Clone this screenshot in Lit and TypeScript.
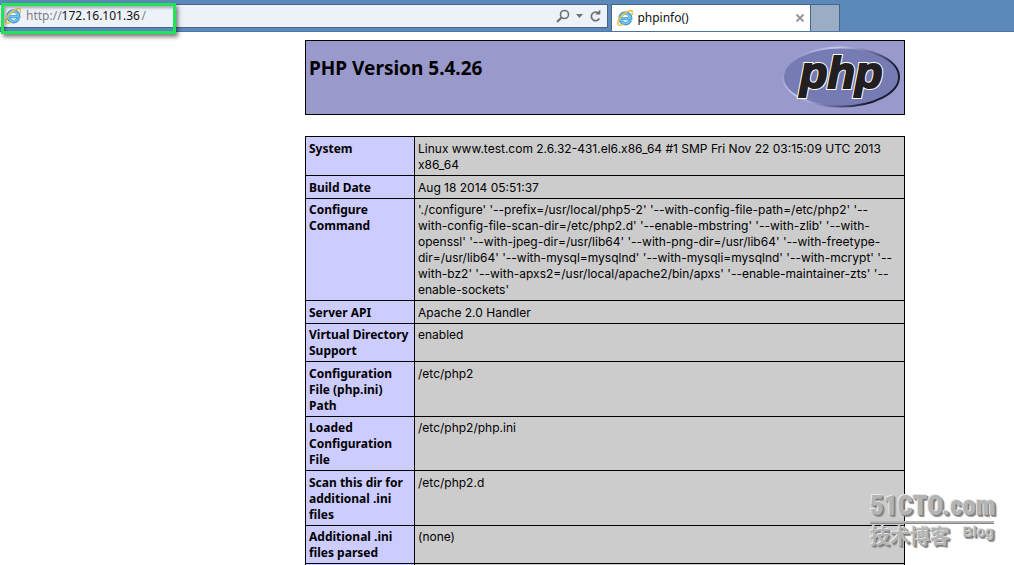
import { LitElement, html, css, svg } from "lit";
import { customElement } from "lit/decorators.js";

interface Row {
  name: string;
  value: string;
}

const ROWS: Row[] = [
  {
    name: "System",
    value: "Linux www.test.com 2.6.32-431.el6.x86_64 #1 SMP Fri Nov 22 03:15:09 UTC 2013\nx86_64",
  },
  { name: "Build Date", value: "Aug 18 2014 05:51:37" },
  {
    name: "Configure\nCommand",
    value: [
      "'./configure' '--prefix=/usr/local/php5-2' '--with-config-file-path=/etc/php2' '--",
      "with-config-file-scan-dir=/etc/php2.d' '--enable-mbstring' '--with-zlib' '--with-",
      "openssl' '--with-jpeg-dir=/usr/lib64' '--with-png-dir=/usr/lib64' '--with-freetype-",
      "dir=/usr/lib64' '--with-mysql=mysqlnd' '--with-mysqli=mysqlnd' '--with-mcrypt' '--",
      "with-bz2' '--with-apxs2=/usr/local/apache2/bin/apxs' '--enable-maintainer-zts' '--",
      "enable-sockets'",
    ].join("\n"),
  },
  { name: "Server API", value: "Apache 2.0 Handler" },
  { name: "Virtual Directory\nSupport", value: "enabled" },
  { name: "Configuration\nFile (php.ini)\nPath", value: "/etc/php2" },
  { name: "Loaded\nConfiguration\nFile", value: "/etc/php2/php.ini" },
  { name: "Scan this dir for\nadditional .ini\nfiles", value: "/etc/php2.d" },
  { name: "Additional .ini\nfiles parsed", value: "(none)" },
];

const browserIcon = () => html`
  <svg class="ie" viewBox="0 0 16 16" width="16" height="16" aria-hidden="true">
    <path
      d="M13.3 10.4A5.3 5.3 0 1 1 13.7 8.6H4.6"
      fill="none"
      stroke="#3f92c8"
      stroke-width="3.4"
    />
    <path
      d="M13 10.6A5 5 0 1 1 13.5 8.4H5"
      fill="none"
      stroke="#6fc3ee"
      stroke-width="2"
    />
    <path
      d="M1.6 15C-.6 13 2 8 6.6 4.2 10.4 1.1 14.2 -.2 15.2 1.2c.7 1 .3 2.4-.5 3.9"
      fill="none"
      stroke="#e8c54a"
      stroke-width="1.7"
    />
    <path d="M1.6 15c1 .8 2.8.2 4.6-.8" fill="none" stroke="#e8c54a" stroke-width="1.5" />
  </svg>
`;

@customElement("browser-bar")
export class BrowserBar extends LitElement {
  static styles = css`
    :host {
      display: flex;
      height: 32px;
      box-sizing: border-box;
      background: #5b8aba;
      border-bottom: 1px solid #4b76a3;
      font: 12px/16px "Noto Sans", "Open Sans", sans-serif;
    }
    .address {
      display: flex;
      align-items: center;
      flex: 0 1 60%;
      box-sizing: border-box;
      margin: 4px 3px 3px 0;
      padding: 0 5px;
      background: #edf2f9;
      border: 1px solid #44668c;
      border-left: 0;
      color: #7b7f85;
    }
    .ie {
      display: block;
      flex: none;
      margin-right: 4px;
    }
    .address .ie {
      margin-right: 5px;
    }
    .url {
      width: 80px;
      padding: 0;
      border: 0;
      outline: 0;
      background: none;
      font: inherit;
      color: #111;
    }
    .tools {
      display: flex;
      align-items: center;
      gap: 6px;
      margin-left: auto;
    }
    button {
      display: block;
      padding: 0;
      border: 0;
      background: none;
    }
    button svg {
      display: block;
    }
    .tab {
      display: flex;
      align-items: center;
      width: 200px;
      box-sizing: border-box;
      margin-top: 4px;
      padding: 0 6px 0 5px;
      background: #fff;
      border: 1px solid #44668c;
      border-bottom: 0;
      color: #111;
    }
    .tab .close {
      margin-left: auto;
    }
    .new-tab {
      width: 29px;
      margin-top: 4px;
      background: #9aadc4;
      border: 1px solid #44668c;
      border-width: 1px 1px 0 0;
    }
  `;

  render() {
    return html`
      <div class="address">
        ${browserIcon()}
        <label for="url">http://</label>
        <input class="url" id="url" type="text" value="172.16.101.36" spellcheck="false" />
        <span>/</span>
        <div class="tools">
          <button aria-label="Search">
            <svg width="14" height="14" viewBox="0 0 14 14" fill="none" stroke="#6c727a">
              <circle cx="8.5" cy="5.5" r="4" stroke-width="1.6" />
              <path d="M5.5 8.5 1 13" stroke-width="2.2" />
            </svg>
          </button>
          <button aria-label="Search options">
            <svg width="7" height="4" viewBox="0 0 7 4"><path d="M0 0h7L3.5 4z" fill="#6c727a" /></svg>
          </button>
          <button aria-label="Refresh">
            <svg width="13" height="14" viewBox="0 0 13 14" fill="none" stroke="#6c727a">
              <path d="M10.4 9.5A4.3 4.3 0 1 1 8.8 3.7" stroke-width="1.7" />
              <path d="M6.3 5.5h5V.5z" fill="#6c727a" stroke="none" />
            </svg>
          </button>
        </div>
      </div>
      <div class="tab">
        ${browserIcon()}
        <span>phpinfo()</span>
        <button class="close" aria-label="Close tab">
          <svg width="8" height="8" viewBox="0 0 8 8" stroke="#999" stroke-width="2">
            <path d="M.5.5l7 7M7.5.5l-7 7" />
          </svg>
        </button>
      </div>
      <button class="new-tab" aria-label="New tab"></button>
    `;
  }
}

@customElement("app-root")
export class AppRoot extends LitElement {
  static styles = css`
    :host {
      display: block;
      position: relative;
      height: 100vh;
      overflow: hidden;
      background: #fff;
      color: #000;
      font: 12px/16px "Noto Sans", "Open Sans", sans-serif;
    }
    .highlight {
      position: absolute;
      left: 1px;
      top: 3px;
      width: 175px;
      height: 31px;
      box-sizing: border-box;
      border: 3px solid #22e45a;
      box-shadow: 2px 3px 4px rgba(0, 0, 0, 0.5), inset 2px 2px 3px rgba(0, 0, 0, 0.3);
      pointer-events: none;
    }
    .page {
      display: flex;
      flex-direction: column;
      align-items: center;
      gap: 21px;
      padding: 8px 0 0 196px;
    }
    .banner {
      display: flex;
      justify-content: space-between;
      align-items: flex-start;
      width: 600px;
      height: 75px;
      box-sizing: border-box;
      padding: 4px 3px;
      background: #9999cc;
      border: 1px solid #000;
    }
    h1 {
      margin: 11px 0 0;
      font-size: 19px;
      line-height: 24px;
      font-weight: 700;
    }
    .logo {
      display: block;
    }
    .logo-text {
      font: italic 700 45px "Liberation Sans", sans-serif;
    }
    table {
      width: 600px;
      border-collapse: collapse;
      table-layout: fixed;
    }
    .name-col {
      width: 109px;
    }
    th,
    td {
      padding: 4px 3px 2px;
      border: 1px solid #000;
      text-align: left;
      vertical-align: top;
      white-space: pre;
    }
    th {
      background: #ccccff;
      font-weight: 700;
    }
    td {
      background: #cccccc;
      font-family: Inter, "Noto Sans", sans-serif;
    }
    tr:nth-child(odd):not(:first-child) > * {
      padding-top: 3px;
    }
    .watermark {
      position: absolute;
      right: 20px;
      bottom: 16px;
      width: 124px;
      color: #b4b4b4;
      font-family: "Liberation Sans", sans-serif;
      font-weight: 700;
      text-shadow: -1px -1px 0 #e8e8e8, 1px 1px 0 #7c7c7c, 2px 2px 1px #909090;
    }
    .site {
      font: 900 27px/30px "Roboto Condensed", "Liberation Sans Narrow", "DejaVu Sans Condensed", sans-serif;
      border-bottom: 2px solid #b4b4b4;
      box-shadow: 0 1px 0 #858585;
    }
    .sub {
      display: flex;
      justify-content: space-between;
      font-size: 14px;
      line-height: 18px;
    }
    .cn {
      font: 700 20px/26px "Noto Sans CJK SC", sans-serif;
    }
  `;

  render() {
    return html`
      <browser-bar></browser-bar>
      <main class="page">
        <header class="banner">
          <h1>PHP Version 5.4.26</h1>
          <svg class="logo" width="120" height="64" viewBox="0 0 120 64" role="img" aria-label="PHP logo">
            <defs>
              <linearGradient id="rim" x1="0" y1="0.3" x2="1" y2="0.7">
                <stop offset="0" stop-color="#8f93c8" />
                <stop offset="0.3" stop-color="#c6caee" />
                <stop offset="0.55" stop-color="#7378a8" />
                <stop offset="0.85" stop-color="#1b1b33" />
              </linearGradient>
            </defs>
            ${svg`<ellipse cx="60" cy="32" rx="58" ry="29.5" fill="#777bb3" stroke="url(#rim)" stroke-width="2" />
            <text class="logo-text" x="19" y="43" fill="#fff" stroke="#fff" stroke-width="4">php</text>
            <text class="logo-text" x="19" y="43" fill="#231f20" stroke="#231f20" stroke-width="2">php</text>`}
          </svg>
        </header>
        <table>
          <colgroup>
            <col class="name-col" />
            <col />
          </colgroup>
          <tbody>
            ${ROWS.map((r) => html`<tr><th scope="row">${r.name}</th><td>${r.value}</td></tr>`)}
            <tr><th></th><td></td></tr>
          </tbody>
        </table>
      </main>
      <div class="highlight"></div>
      <div class="watermark">
        <div class="site">51CTO.com</div>
        <div class="sub"><span class="cn">技术博客</span><span>Blog</span></div>
      </div>
    `;
  }
}
